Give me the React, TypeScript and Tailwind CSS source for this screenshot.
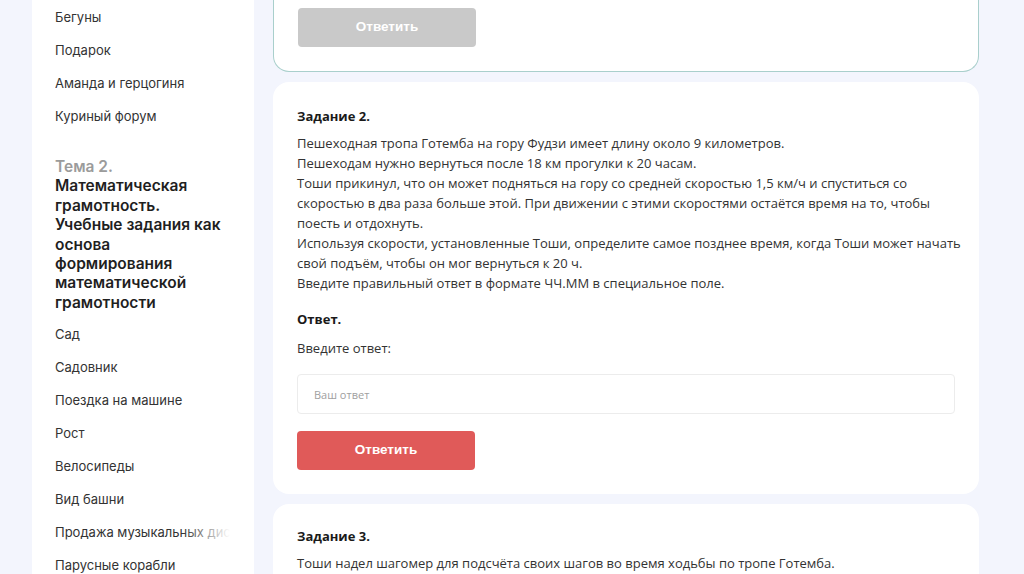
const topicOne = ["Бегуны", "Подарок", "Аманда и герцогиня", "Куриный форум"];

const topicTwo = [
  "Сад",
  "Садовник",
  "Поездка на машине",
  "Рост",
  "Велосипеды",
  "Вид башни",
  "Продажа музыкальных дисков",
  "Парусные корабли",
];

const task2 = [
  "Пешеходная тропа Готемба на гору Фудзи имеет длину около 9 километров.",
  "Пешеходам нужно вернуться после 18 км прогулки к 20 часам.",
  "Тоши прикинул, что он может подняться на гору со средней скоростью 1,5 км/ч и спуститься со скоростью в два раза больше этой. При движении с этими скоростями остаётся время на то, чтобы поесть и отдохнуть.",
  "Используя скорости, установленные Тоши, определите самое позднее время, когда Тоши может начать свой подъём, чтобы он мог вернуться к 20 ч.",
  "Введите правильный ответ в формате ЧЧ.ММ в специальное поле.",
];

function SideItem({ label }: { label: string }) {
  return (
    <li className="relative flex h-[33px] items-center overflow-hidden whitespace-nowrap text-[13px] text-[#333]">
      {label}
      <span className="pointer-events-none absolute inset-y-0 right-0 w-12 bg-gradient-to-r from-white/0 to-white" />
    </li>
  );
}

function AnswerButton({ disabled }: { disabled?: boolean }) {
  return (
    <button
      className={
        "h-[39px] w-[178px] rounded-[4px] text-[13.5px] font-bold text-white font-['Liberation_Sans',Arial,sans-serif] " +
        (disabled ? "bg-[#c9c9c9]" : "bg-[#e05a59]")
      }
    >
      Ответить
    </button>
  );
}

export default function App() {
  return (
    <div className="flex h-[574px] overflow-hidden bg-[#f3f5fd]">
      <aside className="ml-8 w-[222px] shrink-0 bg-white pl-[23px] pr-6 pt-[1px] font-['Inter','Noto_Sans',sans-serif]">
        <ul>
          {topicOne.map((t) => (
            <SideItem key={t} label={t} />
          ))}
        </ul>
        <div className="mb-[6px] mt-6 text-[15.5px] font-semibold leading-[19.4px] text-[#1f1f1f]">
          <div className="text-[#9b9b9b]">Тема 2.</div>
          Математическая
          <br />
          грамотность.
          <br />
          Учебные задания как
          <br />
          основа
          <br />
          формирования
          <br />
          математической
          <br />
          грамотности
        </div>
        <ul>
          {topicTwo.map((t) => (
            <SideItem key={t} label={t} />
          ))}
        </ul>
      </aside>

      <main className="ml-[19px] w-[706px] shrink-0 font-['Open_Sans','Noto_Sans',sans-serif] text-[13px] text-[#333]">
        <section className="rounded-b-2xl border-x border-b border-[#a9cfcc] bg-white px-6 pb-6 pt-2">
          <AnswerButton disabled />
        </section>

        <section className="mt-[10px] rounded-2xl bg-white px-6 pb-6 pt-[24px]">
          <h3 className="text-[13px] font-bold leading-5 text-[#1a1a1a]">Задание 2.</h3>
          <div className="-mr-4 mt-[7px] leading-5">
            {task2.map((p) => (
              <p key={p}>{p}</p>
            ))}
          </div>
          <h4 className="mt-[16px] font-bold leading-5 text-[#1a1a1a]">Ответ.</h4>
          <p className="mt-[9px] leading-5">Введите ответ:</p>
          <input
            className="mt-4 h-10 w-full rounded border border-[#ececec] px-4 text-[11px] placeholder:text-[#a0a0a0] outline-none"
            placeholder="Ваш ответ"
          />
          <div className="mt-[17px]">
            <AnswerButton />
          </div>
        </section>

        <section className="mt-[10px] rounded-2xl bg-white px-6 pb-6 pt-[22px]">
          <h3 className="font-bold leading-5 text-[#1a1a1a]">Задание 3.</h3>
          <p className="mt-[7px] leading-5">
            Тоши надел шагомер для подсчёта своих шагов во время ходьбы по тропе Готемба.
          </p>
        </section>
      </main>
    </div>
  );
}
